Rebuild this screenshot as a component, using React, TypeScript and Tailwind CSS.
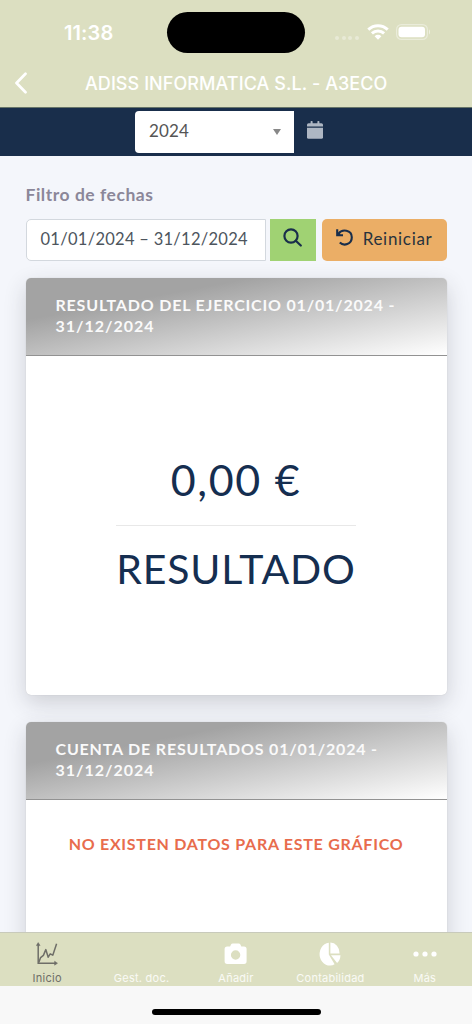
import type { ReactNode } from 'react'

function WifiIcon() {
  return (
    <svg width="22" height="16" viewBox="0 0 22 16" fill="none" stroke="#fff" strokeWidth="3">
      <path d="M1.3 5.6C6.8.5 15.2.5 20.7 5.6" />
      <path d="M4.9 9.4c3.5-3.2 8.7-3.2 12.2 0" />
      <path d="M7.6 12.2c2-1.8 4.8-1.8 6.8 0L11 15.7z" fill="#fff" stroke="none" />
    </svg>
  )
}

function BatteryIcon() {
  return (
    <svg width="35" height="16" viewBox="0 0 35 16" fill="none">
      <rect x="0.6" y="0.6" width="30.8" height="14.8" rx="4.8" stroke="#fff" strokeOpacity="0.4" strokeWidth="1.2" />
      <rect x="2.5" y="2.7" width="26.5" height="10.6" rx="3" fill="#fff" />
      <path d="M33 5.6c1.4.6 1.4 4.2 0 4.8z" fill="#fff" fillOpacity="0.5" />
    </svg>
  )
}

function CalendarIcon() {
  return (
    <svg width="16" height="18" viewBox="0 0 16 18" fill="#aeb7c3">
      <path d="M0 5.5V3.8Q0 2.2 1.6 2.2H3.6V.6Q3.6 0 4.2 0H5Q5.6 0 5.6.6V2.2H10.4V.6Q10.4 0 11 0H11.8Q12.4 0 12.4.6V2.2H14.4Q16 2.2 16 3.8V5.5z" />
      <path d="M0 6.7H16V16.2Q16 17.8 14.4 17.8H1.6Q0 17.8 0 16.2z" />
    </svg>
  )
}

function ChartIcon() {
  return (
    <svg width="22" height="24" viewBox="0 0 22 24" fill="none" stroke="#6e6e68" strokeWidth="1.5">
      <path d="M2.2 2V21.2H20" />
      <path d="M.3 3.6 2.2.6 4.1 3.6zM18.6 19.2 21.5 21.2 18.6 23.2z" fill="#6e6e68" strokeWidth="0.5" />
      <path d="M2.8 20.4 4.6 15.6 7.4 13.4 9.8 7.6 12.2 15.2 14.2 11.8 16.8 13.2 20.6 1.8" strokeLinejoin="round" />
    </svg>
  )
}

function CameraIcon() {
  return (
    <svg width="24" height="22" viewBox="0 0 24 22" fill="#fff">
      <path
        fillRule="evenodd"
        d="M3 3.6H6.1L7 1.5Q7.5.4 8.8.4H14.6Q15.9.4 16.4 1.5L17.3 3.6H20Q22.6 3.6 22.6 6.2V18.3Q22.6 20.9 20 20.9H3.2Q.6 20.9.6 18.3V6.2Q.6 3.6 3.2 3.6zM11.6 7.3a4.7 4.7 0 1 0 0 9.4 4.7 4.7 0 1 0 0-9.4z"
      />
    </svg>
  )
}

function PieIcon() {
  return (
    <svg width="22" height="24" viewBox="0 0 22 24" fill="#fff">
      <path d="M9.8.8V12.6L15.6 22.2A10.2 11.4 0 1 1 9.8.8z" />
      <path d="M11.4.5A9.4 10.8 0 0 1 20.6 11.4H11.4z" />
      <path d="M12 13.3H21.5Q21.2 18.3 18.1 21z" />
    </svg>
  )
}

function DotsIcon() {
  return (
    <svg width="24" height="6" viewBox="0 0 24 6" fill="#fff">
      <circle cx="3" cy="3" r="2.6" />
      <circle cx="12" cy="3" r="2.6" />
      <circle cx="21" cy="3" r="2.6" />
    </svg>
  )
}

function Card({ title, className, children }: { title: string; className: string; children: ReactNode }) {
  return (
    <section
      className={`flex shrink-0 flex-col overflow-hidden rounded-[5px] bg-white shadow-[0_8px_22px_rgba(40,44,55,0.19),0_0_1px_rgba(0,0,0,0.2)] ${className}`}
    >
      <header className="h-[78px] shrink-0 border-b border-[#929292] bg-[linear-gradient(169.5deg,#a3a3a3_27%,#ffffff_100%)] pt-[16px] pl-[30px] text-base leading-[21px] font-bold text-[#fafafa]">
        <p className="tracking-[0.81px] whitespace-nowrap">{title} 01/01/2024 -</p>
        <p className="tracking-[1px]">31/12/2024</p>
      </header>
      {children}
    </section>
  )
}

const tabs = [
  { label: 'Inicio', icon: <ChartIcon />, color: 'text-[#6e6e68]' },
  { label: 'Gest. doc.', icon: null, color: 'text-white/85' },
  { label: 'Añadir', icon: <CameraIcon />, color: 'text-white/85' },
  { label: 'Contabilidad', icon: <PieIcon />, color: 'text-white/85' },
  { label: 'Más', icon: <DotsIcon />, color: 'text-white/85' },
]

export default function App() {
  return (
    <div className="flex h-[1024px] w-[472px] flex-col overflow-hidden bg-[#f4f6fb] font-['Lato',sans-serif]">
      <div className="h-[107px] shrink-0 bg-[#dcdfc1] font-['Inter',sans-serif] text-white">
        <div className="flex h-[53px] items-end">
          <span className="w-[167px] pb-[8px] pl-[64px] text-[20px] leading-6 font-semibold tracking-[0.1px]">11:38</span>
          <div className="h-[41px] w-[138px] shrink-0 rounded-full bg-black" />
          <div className="flex items-center pb-[13px] pl-[30px]">
            <div className="mt-[11px] flex gap-[2.5px]">
              {[0, 1, 2, 3].map(i => (
                <i key={i} className="size-1 rounded-full bg-white/35" />
              ))}
            </div>
            <span className="ml-2"><WifiIcon /></span>
            <span className="ml-[7px]"><BatteryIcon /></span>
          </div>
        </div>
        <div className="flex h-[54px] items-center">
          <span className="mt-[6px] w-[85px] pl-[14px]">
            <svg width="14" height="22" viewBox="0 0 14 22" fill="none" stroke="#fff" strokeWidth="2.7" strokeLinecap="round" strokeLinejoin="round">
              <path d="M11.5 1.8 2.5 11 11.5 20.2" />
            </svg>
          </span>
          <h1 className="mt-[7px] text-[18px] font-medium tracking-[0.07px] whitespace-nowrap">ADISS INFORMATICA S.L. - A3ECO</h1>
        </div>
      </div>

      <div className="flex h-[49px] shrink-0 items-start border-t border-[#667468] bg-[#192e4b] pt-[3px] pl-[135px]">
        <div className="flex h-[42px] w-[159px] items-center justify-between rounded-l-[4px] bg-white pr-[13px] pb-[2px] pl-[14px] text-[17px] text-[#555]">
          <span className="tracking-[0.1px]">2024</span>
          <i className="mt-[2px] border-x-[4.5px] border-t-[6px] border-x-transparent border-t-[#888]" />
        </div>
        <span className="mt-[10px] ml-[13px]"><CalendarIcon /></span>
      </div>

      <main className="flex min-h-0 flex-1 flex-col overflow-hidden px-[25.5px] pt-[27px]">
        <label className="text-[17.5px] leading-6 font-bold tracking-[0.52px] text-[#8b8799]">Filtro de fechas</label>
        <div className="mt-3 flex h-[42px] shrink-0">
          <div className="flex w-[241px] items-center rounded-l-[5px] border border-[#d3d8de] bg-white pb-[2px] pl-[14px] text-[16.5px] tracking-[0.28px] whitespace-nowrap text-[#4d555d]">
            01/01/2024 – 31/12/2024
          </div>
          <button className="ml-[4px] flex w-[46px] items-center justify-center bg-[#a0d273]">
            <svg className="mr-[2px] mb-[5px]" width="19" height="19" viewBox="0 0 19 19" fill="none" stroke="#192e4b" strokeWidth="2.2" strokeLinecap="round">
              <circle cx="8" cy="8" r="6.6" />
              <path d="m12.8 12.8 5 4.7" />
            </svg>
          </button>
          <button className="ml-[5.5px] flex w-[125px] items-center rounded-[5px] bg-[#ebae66] pb-[3px] pl-[14px] text-[17px] text-[#28333d]">
            <svg className="mb-[2px]" width="17" height="17" viewBox="0 0 17 17" fill="none" stroke="#192e4b" strokeWidth="2.1">
              <path d="M2.4 4.8C6-.4 15.8.8 15.8 8.3 15.8 15.4 7.8 17.6 3.8 13.5" />
              <path d="M1.2.3V6.2H7" />
              <path d="M1.2 2.4V6.2H5z" fill="#192e4b" stroke="none" />
            </svg>
            <span className="ml-[10px] tracking-[0.7px]">Reiniciar</span>
          </button>
        </div>

        <Card title="RESULTADO DEL EJERCICIO" className="mt-[17px] h-[417px]">
          <div className="flex flex-col items-center pt-[99px] text-[41px] leading-[50px] text-[#152e50]">
            <p className="text-[43px] tracking-[1.7px] whitespace-nowrap">0,00 €</p>
            <hr className="mt-[20px] w-[240px] border-[#e8e8e8]" />
            <p className="mt-[18px] tracking-[0.8px]">RESULTADO</p>
          </div>
        </Card>

        <Card title="CUENTA DE RESULTADOS" className="mt-[27px] h-[418px]">
          <p className="pt-[32px] text-center text-base leading-6 font-bold tracking-[0.73px] whitespace-nowrap text-[#e86c4d]">
            NO EXISTEN DATOS PARA ESTE GRÁFICO
          </p>
        </Card>
      </main>

      <nav className="flex h-[54px] shrink-0 border-t border-[#c8cabb] bg-[#dcdfc1] font-['Inter',sans-serif]">
        {tabs.map(tab => (
          <div key={tab.label} className={`flex flex-1 flex-col items-center ${tab.color}`}>
            <div className="flex h-[38px] items-center pt-[3px]">{tab.icon}</div>
            <span className="text-[11px] leading-[14px] tracking-[0.25px]">{tab.label}</span>
          </div>
        ))}
      </nav>
      <footer className="flex h-[38px] shrink-0 justify-center bg-[#f8f8f8] pt-[23px]">
        <div className="h-[6px] w-[169px] rounded-full bg-black" />
      </footer>
    </div>
  )
}
